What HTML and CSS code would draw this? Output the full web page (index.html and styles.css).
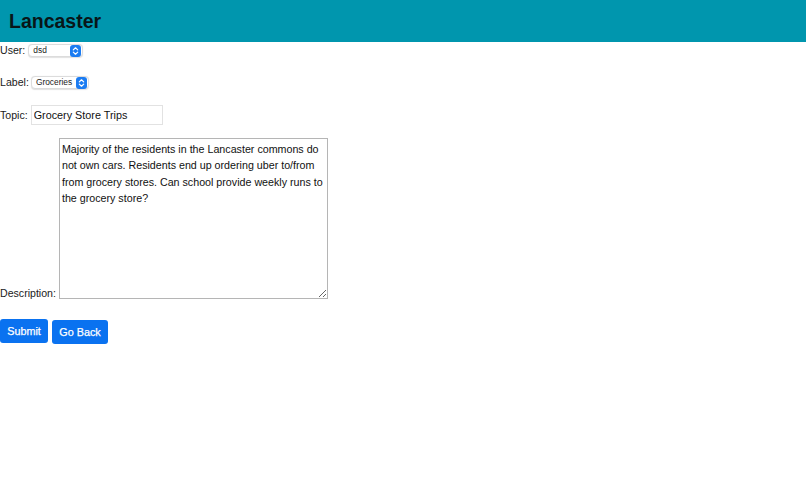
FILE: index.html
```html
<!DOCTYPE html>
<html lang="en">
<head>
<meta charset="utf-8">
<title>Lancaster</title>
<link rel="stylesheet" href="styles.css">
</head>
<body>
<header class="topbar">
  <h1 class="brand">Lancaster</h1>
</header>
<form class="form">
  <div class="row row-user">
    <span class="lbl">User:</span>
    <span class="select select-user"><span class="select-text">dsd</span><svg class="select-icon" viewBox="0 0 11 12" width="11" height="12"><rect x="0" y="0" width="11" height="12" rx="3" fill="#1b7cf2"/><path d="M3.3 4.9 L5.5 2.8 L7.7 4.9 M3.3 7.1 L5.5 9.2 L7.7 7.1" fill="none" stroke="#fff" stroke-width="1.2" stroke-linecap="round" stroke-linejoin="round"/></svg></span>
  </div>
  <div class="row row-label">
    <span class="lbl">Label:</span>
    <span class="select select-label"><span class="select-text">Groceries</span><svg class="select-icon" viewBox="0 0 11 12" width="11" height="12"><rect x="0" y="0" width="11" height="12" rx="3" fill="#1b7cf2"/><path d="M3.3 4.9 L5.5 2.8 L7.7 4.9 M3.3 7.1 L5.5 9.2 L7.7 7.1" fill="none" stroke="#fff" stroke-width="1.2" stroke-linecap="round" stroke-linejoin="round"/></svg></span>
  </div>
  <div class="row row-topic">
    <span class="lbl">Topic:</span>
    <input class="text-input" type="text" value="Grocery Store Trips">
  </div>
  <div class="row row-desc">
    <span class="lbl">Description:</span>
    <textarea class="desc">Majority of the residents in the Lancaster commons do not own cars. Residents end up ordering uber to/from from grocery stores. Can school provide weekly runs to the grocery store?</textarea>
  </div>
  <div class="row row-btns">
    <button type="button" class="btn btn-submit">Submit</button>
    <button type="button" class="btn btn-back">Go Back</button>
  </div>
</form>
</body>
</html>
```

FILE: styles.css
```css
* { box-sizing: border-box; }

html, body {
  margin: 0;
  padding: 0;
  background: #ffffff;
}

body {
  font-family: "Liberation Sans", Arial, sans-serif;
  font-size: 10.6px;
  color: #1a1a1a;
}

.topbar {
  height: 42px;
  background: #0096ae;
  display: flex;
  align-items: center;
  padding-left: 9px;
}

.brand {
  margin: 0;
  font-size: 19.5px;
  font-weight: bold;
  color: #081619;
  line-height: 1;
  padding-top: 1px;
}

.form {
  display: flex;
  flex-direction: column;
}

.row {
  display: flex;
  align-items: center;
}

.lbl {
  color: #1a1a1a;
  line-height: 1;
}

.row-user { margin-top: 2px; gap: 3px; }
.row-label { margin-top: 19px; gap: 2px; }
.row-topic { margin-top: 16px; gap: 3px; }
.row-desc { margin-top: 13px; gap: 3px; align-items: flex-end; }
.row-btns { margin-top: 20px; gap: 4px; align-items: flex-start; }

.select {
  display: inline-flex;
  align-items: center;
  justify-content: space-between;
  height: 13px;
  border: 1px solid #dcdcdc;
  border-radius: 4px;
  background: #fff;
  box-shadow: 0 0.5px 1px rgba(0,0,0,0.12);
  padding: 0 1px 0 4px;
}

.select-user { width: 55px; }
.select-label { width: 58px; }

.select-text {
  font-size: 8.4px;
  color: #222;
  line-height: 1;
}

.select-icon {
  display: block;
  flex: none;
}

.text-input {
  width: 132px;
  height: 20px;
  margin: 0;
  border: 1px solid #e2e2e2;
  border-radius: 0;
  padding: 0 2px;
  font-family: "Liberation Sans", Arial, sans-serif;
  font-size: 10.8px;
  color: #111;
  background: #fff;
  outline: none;
}

.desc {
  width: 269px;
  height: 161px;
  margin: 0;
  border: 1px solid #b5b5b5;
  border-radius: 0;
  padding: 2px 2px;
  font-family: "Liberation Sans", Arial, sans-serif;
  font-size: 10.7px;
  line-height: 16.3px;
  color: #111;
  resize: both;
  outline: none;
}

.btn {
  margin: 0;
  border: 0;
  border-radius: 3px;
  background: #0a72f0;
  color: #ffffff;
  font-family: "Liberation Sans", Arial, sans-serif;
  font-size: 10.8px;
  height: 24px;
  padding: 0 7px;
  line-height: 24px;
  -webkit-text-stroke: 0.25px #ffffff;
}

.btn-submit { width: 48px; }
.btn-back { width: 56px; margin-top: 1px; }
```
